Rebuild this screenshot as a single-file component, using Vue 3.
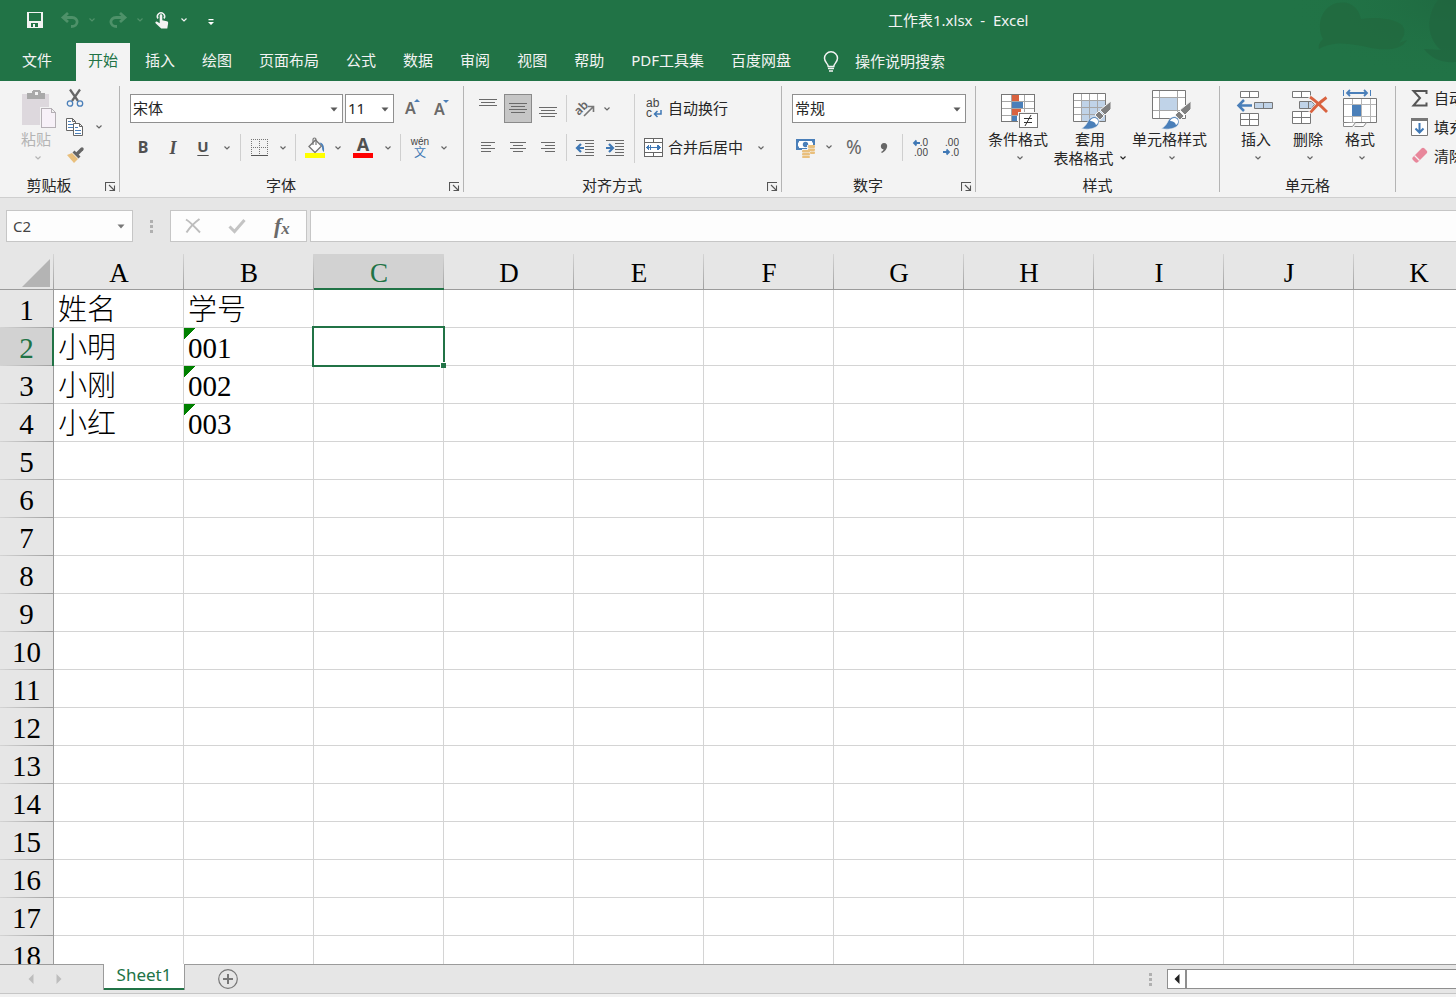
<script setup>
import { ref } from 'vue'

const tabs = ['开始', '插入', '绘图', '页面布局', '公式', '数据', '审阅', '视图', '帮助', 'PDF工具集', '百度网盘']
const activeTab = ref('开始')
const columns = ['A', 'B', 'C', 'D', 'E', 'F', 'G', 'H', 'I', 'J', 'K']
const rowCount = 18
const cells = {
  A1: '姓名', B1: '学号',
  A2: '小明', B2: '001',
  A3: '小刚', B3: '002',
  A4: '小红', B4: '003',
}
const flagged = ['B2', 'B3', 'B4']
const selected = ref('C2')
const formula = ref('')
const isCol = (c) => selected.value.replace(/\d+/, '') === c
const isRow = (r) => selected.value.replace(/\D+/, '') === String(r)
</script>

<template>
  <div class="app">
    <svg class="defs" aria-hidden="true">
      <symbol id="chev" viewBox="0 0 8 6"><path d="M1.5 1.5 4 4 6.5 1.5" fill="none" stroke="currentColor" stroke-width="1.2" /></symbol>
      <symbol id="caret" viewBox="0 0 8 5"><path d="M.5 .5h7L4 4.5z" fill="currentColor" /></symbol>
      <symbol id="launch" viewBox="0 0 11 10">
        <path d="M.5 9V.5H10M4 3l5 5M9.5 3.500v5H4.500" fill="none" stroke="#555" stroke-width="1.100" />
      </symbol>
      <symbol id="brush" viewBox="0 0 44 44">
        <path d="M43 15v8l-6 6-5-5z" fill="#7f7f7f" stroke="#f3f3f3" stroke-width="1" />
        <path d="m31 25 5 5-4 4-5-5z" fill="#7f7f7f" stroke="#f3f3f3" stroke-width="1" />
        <path d="M13 42.500c5-2 6-6 8-9s7-4 9-1 1 7-3 9-9 2-14 1z" fill="#4a7fb9" stroke="#f3f3f3" stroke-width=".6" />
        <path d="M22 35c1-3 5-4 7-2s1 5-1 6c-1-3-3-4-6-4z" fill="#fff" />
      </symbol>
    </svg>

    <header class="top">
      <svg class="deco" width="170" height="81" viewBox="0 0 170 81" aria-hidden="true">
        <defs>
          <radialGradient id="shade" cx="1" cy="0" r="1">
            <stop offset="0" stop-color="#1f6840" stop-opacity=".9" />
            <stop offset="1" stop-color="#217346" stop-opacity="0" />
          </radialGradient>
        </defs>
        <rect width="170" height="81" fill="url(#shade)" />
        <path d="M33 49C32 45 34 42 37 39 31 28 33 8 51 3c14-3 22 6 24 16 14-2 32-1 41 6 4 6 3 11-3 18l8-3c-5 9-18 11-36 8C68 44 48 40 33 49z" fill="#22693f" opacity=".8" />
        <path d="M170 0h-18c-9 12-11 26-6 38 2 5 5 9 9 12l-17-1c7 9 17 14 32 13z" fill="#21653f" opacity=".7" />
      </svg>
      <div class="titlebar">
        <div class="quick">
          <button class="q save" aria-label="保存">
            <svg width="16" height="16" viewBox="0 0 16 16" class="crisp"><path d="M0 0h16v16H0zM2 1v8h12V1zM4 11v4h2v-3h2v3h3v-4z" fill="#f3f3f3" fill-rule="evenodd" /></svg>
          </button>
          <button class="q dim" aria-label="撤消">
            <svg width="18" height="16" viewBox="0 0 18 16"><path d="M7 1 2 5.500 7 10M2 5.500h9c7 0 7 9-1 9" fill="none" stroke="currentColor" stroke-width="2.800" /></svg>
          </button>
          <button class="qc dim" aria-label="撤消选项"><svg width="8" height="6"><use href="#chev" /></svg></button>
          <button class="q dim redo" aria-label="恢复">
            <svg width="18" height="16" viewBox="0 0 18 16"><path d="m11 1 5 4.500L11 10M16 5.500H7c-7 0-7 9 1 9" fill="none" stroke="currentColor" stroke-width="2.800" /></svg>
          </button>
          <button class="qc dim" aria-label="恢复选项"><svg width="8" height="6"><use href="#chev" /></svg></button>
          <button class="q hand" aria-label="触摸/鼠标模式">
            <svg width="14" height="18" viewBox="0 0 14 18">
              <path d="M3 7.500a3.600 3.600 0 1 1 6 0" fill="none" stroke="#f3f3f3" stroke-width="1.500" />
              <path d="M4.700 4.500c0-1.700 2.600-1.700 2.600 0v4.700l4.500 1c1.200.3 1.500 1 1.300 2.200l-.8 5.100H6.200L.6 12.300c-.8-1 .5-2.200 1.600-1.500l2.500 1.400z" fill="#f3f3f3" />
            </svg>
          </button>
          <button class="qc" aria-label="触摸选项"><svg width="8" height="6"><use href="#chev" /></svg></button>
          <button class="qc custom" aria-label="自定义快速访问工具栏">
            <svg width="6" height="7" viewBox="0 0 6 7"><path d="M.5 0h5v1.200h-5zM0 3h6L3 6z" fill="#fff" /></svg>
          </button>
        </div>
        <div class="title">工作表1.xlsx&nbsp; -&nbsp; Excel</div>
      </div>
      <nav class="tabs">
        <button class="tab file">文件</button>
        <button v-for="t in tabs" :key="t" class="tab" :class="{ active: t === activeTab }" @click="activeTab = t">{{ t }}</button>
        <button class="tell">
          <svg width="16" height="22" viewBox="0 0 16 22"><path d="M5.200 15.500c0-3-3.700-4-3.700-8.200a6.500 6.500 0 0 1 13 0c0 4.200-3.700 5.200-3.700 8.200zM5 17.500h6M6 20h4" fill="none" stroke="#f3f3f3" stroke-width="1.500" /></svg>
          <span>操作说明搜索</span>
        </button>
      </nav>
    </header>

    <section class="ribbon">
      <div class="group g-clip">
        <div class="body">
          <button class="big disabled">
            <svg width="44" height="44" viewBox="0 0 44 44" class="crisp">
              <path d="M8 8h27v31H8z" fill="#ddd8dd" />
              <path d="M13 7h5V5l2-1h5l2 1v2h4v6H13z" fill="#a9a9a9" />
              <path d="M21 6h3v3h-3z" fill="#f3f3f3" />
              <path d="M26 21h17v22H26z" fill="#f3f3f3" />
              <path d="M27.500 22.500h10l4 4v15h-14zM37.500 22.500v4h4" fill="#f7f1f8" stroke="#b5b0b5" />
            </svg>
            <span>粘贴</span>
            <span class="down"><svg width="8" height="6"><use href="#chev" /></svg></span>
          </button>
          <div class="stack">
            <button class="sm" aria-label="剪切">
              <svg width="18" height="18" viewBox="0 0 18 18">
                <path d="M4 .5 12 12M14 .5 6 12" stroke="#666" stroke-width="2.200" />
                <circle cx="4" cy="14.500" r="2.700" fill="none" stroke="#4a7fb9" stroke-width="1.300" /><circle cx="14" cy="14.500" r="2.700" fill="none" stroke="#4a7fb9" stroke-width="1.300" />
              </svg>
            </button>
            <div class="pair">
              <button class="sm" aria-label="复制">
                <svg width="18" height="18" viewBox="0 0 18 18">
                  <path d="M.5.5h6l3 3v9h-9zM6.500.5v3h3" fill="#fff" stroke="#666" />
                  <path d="M2 3.500h3M2 6.500h5M2 9.500h5" stroke="#4a7fb9" />
                  <path d="M7.500 5.500h6l3 3v9h-9zM13.500 5.500v3h3" fill="#fff" stroke="#666" />
                  <path d="M9 9.500h3M9 12.500h6M9 15.500h6" stroke="#4a7fb9" />
                </svg>
              </button>
              <button class="chev" aria-label="复制选项"><svg width="8" height="6"><use href="#chev" /></svg></button>
            </div>
            <button class="sm" aria-label="格式刷">
              <svg width="18" height="18" viewBox="0 0 18 18">
                <path d="m1 8 5-2 6 6-4 4z" fill="#e9bf7c" /><path d="m6.500 5.500 2-2 6 6-2 2z" fill="#666" /><path d="M11.500 6.500 16 2" stroke="#666" stroke-width="3.400" stroke-linecap="round" />
              </svg>
            </button>
          </div>
        </div>
        <div class="label">剪贴板</div>
        <button class="launcher" aria-label="剪贴板设置"><svg width="11" height="10"><use href="#launch" /></svg></button>
      </div>

      <div class="group g-font">
        <div class="rows">
          <div class="row fields">
            <label class="pick name"><select aria-label="字体"><option>宋体</option></select><svg width="8" height="5"><use href="#caret" /></svg></label>
            <label class="pick size"><select aria-label="字号"><option>11</option></select><svg width="8" height="5"><use href="#caret" /></svg></label>
            <div class="pair grow">
              <button class="tool" aria-label="增大字号"><svg width="20" height="24" viewBox="0 0 20 24"><text x="3" y="17" class="ga">A</text><path d="M12 5h6l-3-3z" fill="#4a7fb9" /></svg></button>
              <button class="tool" aria-label="减小字号"><svg width="20" height="24" viewBox="0 0 20 24"><text x="4" y="18" class="ga">A</text><path d="M13 3h6l-3 3z" fill="#4a7fb9" /></svg></button>
            </div>
          </div>
          <div class="row">
            <button class="tool w30 bold">B</button>
            <button class="tool w30 ital">I</button>
            <button class="tool w30 under">U</button>
            <button class="chev" aria-label="下划线选项"><svg width="8" height="6"><use href="#chev" /></svg></button>
            <i class="sep"></i>
            <button class="tool w30" aria-label="边框">
              <svg width="18" height="18" viewBox="0 0 18 18" class="crisp"><path d="M0 .5h17M0 8.500h17M.5 0v16M8.500 0v16M16.500 0v16" stroke="#777" stroke-dasharray="1 1" /><path d="M0 16.500h17" stroke="#555" /></svg>
            </button>
            <button class="chev c16" aria-label="边框选项"><svg width="8" height="6"><use href="#chev" /></svg></button>
            <i class="sep"></i>
            <button class="tool w30" aria-label="填充颜色">
              <svg width="20" height="21" viewBox="0 0 20 21">
                <path d="M4 9.500 10.500 3l6 6-6.500 6.500z" fill="#fff" stroke="#777" stroke-width="1.300" />
                <path d="M8 8V2.500c0-2 3-2 3 0V8" fill="none" stroke="#777" stroke-width="1.200" />
                <path d="m14.500 5.500 2 .5c2 1 3 4 2.500 9-2-1-2-4-2-6z" fill="#4a7fb9" />
                <path d="M0 16h20v5H0z" fill="#ff0" />
              </svg>
            </button>
            <button class="chev c16" aria-label="填充颜色选项"><svg width="8" height="6"><use href="#chev" /></svg></button>
            <button class="tool w34" aria-label="字体颜色">
              <svg width="20" height="21" viewBox="0 0 20 21"><text x="10" y="14" class="fa">A</text><path d="M0 16h20v5H0z" fill="#f00" /></svg>
            </button>
            <button class="chev c16" aria-label="字体颜色选项"><svg width="8" height="6"><use href="#chev" /></svg></button>
            <i class="sep"></i>
            <button class="tool w30" aria-label="拼音指南">
              <svg width="20" height="22" viewBox="0 0 20 22"><text x="10" y="8" class="py">wén</text><text x="10" y="20" class="wen">文</text></svg>
            </button>
            <button class="chev" aria-label="拼音选项"><svg width="8" height="6"><use href="#chev" /></svg></button>
          </div>
        </div>
        <div class="label shift">字体</div>
        <button class="launcher" aria-label="字体设置"><svg width="11" height="10"><use href="#launch" /></svg></button>
      </div>

      <div class="group g-align">
        <div class="rows split">
          <div class="half">
            <div class="row gap2">
              <button class="tool" aria-label="顶端对齐"><svg width="20" height="28" viewBox="0 0 20 28" class="crisp"><path d="M1 4.500h18M3 7.500h14M1 10.500h18" class="ln" /></svg></button>
              <button class="tool on" aria-label="垂直居中"><svg width="20" height="27" viewBox="0 0 20 27" class="crisp"><path d="M1 8.500h18M3 11.500h14M1 14.500h18M3 17.500h14" class="ln" /></svg></button>
              <button class="tool" aria-label="底端对齐"><svg width="20" height="28" viewBox="0 0 20 28" class="crisp"><path d="M1 12.500h18M3 15.500h14M1 18.500h18M3 21.500h14" class="ln" /></svg></button>
              <i class="sep mid"></i>
              <button class="tool" aria-label="方向">
                <svg width="20" height="20" viewBox="0 0 20 20"><text x="0" y="12" class="ab" transform="rotate(-45 8 10)">ab</text><path d="m9 17 9-9M13 7.500h5.500V13" fill="none" stroke="#777" stroke-width="1.600" /></svg>
              </button>
              <button class="chev c12" aria-label="方向选项"><svg width="8" height="6"><use href="#chev" /></svg></button>
            </div>
            <div class="row gap2">
              <button class="tool" aria-label="左对齐"><svg width="18" height="18" viewBox="0 0 18 18" class="crisp"><path d="M2 3.500h14M2 6.500h10M2 9.500h14M2 12.500h10" class="ln" /></svg></button>
              <button class="tool" aria-label="居中"><svg width="18" height="18" viewBox="0 0 18 18" class="crisp"><path d="M1 3.500h16M4 6.500h10M1 9.500h16M4 12.500h10" class="ln" /></svg></button>
              <button class="tool" aria-label="右对齐"><svg width="18" height="18" viewBox="0 0 18 18" class="crisp"><path d="M2 3.500h14M6 6.500h10M2 9.500h14M6 12.500h10" class="ln" /></svg></button>
              <i class="sep mid"></i>
              <button class="tool" aria-label="减少缩进量"><svg width="18" height="18" viewBox="0 0 18 18"><path d="M0 1.500h18M9 4.500h9M9 7.500h9M9 10.500h9M9 13.500h9M0 16.500h18" class="ln" /><path d="M8 9H1M5 5 1 9l4 4" fill="none" stroke="#3f78b5" stroke-width="2.200" /></svg></button>
              <button class="tool" aria-label="增加缩进量"><svg width="18" height="18" viewBox="0 0 18 18"><path d="M0 1.500h18M9 4.500h9M9 7.500h9M9 10.500h9M9 13.500h9M0 16.500h18" class="ln" /><path d="M0 9h7M3 5l4 4-4 4" fill="none" stroke="#3f78b5" stroke-width="2.200" /></svg></button>
            </div>
          </div>
          <i class="sep tall"></i>
          <div class="half">
            <div class="row">
              <button class="wide">
                <svg width="20" height="20" viewBox="0 0 20 20"><text x="2" y="8" class="abc">ab</text><text x="2" y="18" class="abc">c</text><path d="M17 11v4h-6M13.500 12l-3 3 3 3" fill="none" stroke="#3f78b5" stroke-width="1.500" /></svg>
                <span>自动换行</span>
              </button>
            </div>
            <div class="row">
              <button class="wide">
                <svg width="20" height="20" viewBox="0 0 20 20" class="crisp"><path d="M.5.5h18v18H.5zM.5 4.500h18M.5 14.500h18M9.500 0v4M9.500 15v4" fill="#fff" stroke="#666" /><path d="M3 9.500h13M6 7v5M13 7v5" stroke="#3f78b5" /><path d="M2 9.500 5 7v5zM17 9.500 14 7v5z" fill="#3f78b5" /></svg>
                <span>合并后居中</span>
                <svg class="wc" width="8" height="6"><use href="#chev" /></svg>
              </button>
            </div>
          </div>
        </div>
        <div class="label shift">对齐方式</div>
        <button class="launcher" aria-label="对齐设置"><svg width="11" height="10"><use href="#launch" /></svg></button>
      </div>

      <div class="group g-num">
        <div class="rows">
          <div class="row">
            <label class="pick fmt"><select aria-label="数字格式"><option>常规</option></select><svg width="8" height="5"><use href="#caret" /></svg></label>
          </div>
          <div class="row gap2">
            <div class="pair">
              <button class="tool" aria-label="会计数字格式">
                <svg width="20" height="20" viewBox="0 0 20 20">
                  <path d="M0 1h19v11H0z" fill="#4a7fb9" /><path d="M3 3h13v1.500h1v4h-1V10H3V8.500H2v-4h1z" fill="#fff" /><circle cx="9.500" cy="6.500" r="2.700" fill="#4a7fb9" />
                  <path d="M11 7h9v12h-5v1H6v-9h5z" fill="#f3f3f3" />
                  <g fill="#e9bf7c"><rect x="12" y="7" width="7" height="3" rx="1" /><rect x="12" y="10.500" width="7" height="2.500" rx="1" /><rect x="14" y="13.500" width="5" height="2.500" rx="1" /><rect x="6" y="12" width="8" height="2.500" rx="1" /><rect x="6" y="15" width="8" height="2.500" rx="1" /><rect x="6" y="18" width="8" height="2" rx="1" /></g>
                </svg>
              </button>
              <button class="chev" aria-label="货币选项"><svg width="8" height="6"><use href="#chev" /></svg></button>
            </div>
            <button class="tool pct">%</button>
            <button class="tool" aria-label="千位分隔样式"><svg width="8" height="12" viewBox="0 0 8 12"><path d="M4 1c5 0 4 7-2 10L1 10c2-1 2.500-2 2.500-2.700C-.2 7 0 1 4 1z" fill="#666" /></svg></button>
            <i class="sep mid"></i>
            <button class="tool" aria-label="增加小数位数"><svg width="18" height="20" viewBox="0 0 18 20"><text x="16" y="8" class="dec">.0</text><text x="16" y="18" class="dec">.00</text><path d="M8 5H2M4.500 2.500 2 5l2.500 2.500" fill="none" stroke="#3f78b5" stroke-width="1.800" /></svg></button>
            <button class="tool" aria-label="减少小数位数"><svg width="18" height="20" viewBox="0 0 18 20"><text x="17" y="8" class="dec">.00</text><text x="17" y="18" class="dec">.0</text><path d="M1 14h6M4.500 11.500 7 14l-2.500 2.500" fill="none" stroke="#3f78b5" stroke-width="1.800" /></svg></button>
          </div>
        </div>
        <div class="label shift">数字</div>
        <button class="launcher" aria-label="数字设置"><svg width="11" height="10"><use href="#launch" /></svg></button>
      </div>

      <div class="group g-style">
        <div class="body">
          <button class="big">
            <svg width="44" height="44" viewBox="0 0 44 44" class="crisp">
              <path d="M5.500 8.500h33v27h-33z" fill="#fff" />
              <path d="M5 15.500h34M5 22.500h34M5 29.500h34M15.500 8v28M28.500 8v28" stroke="#a6a6a6" />
              <path d="M5.500 8.500h33v27h-33z" fill="none" stroke="#777" />
              <path d="M16 9h7v6h-7zM16 23h9v6h-9z" fill="#d9623f" /><path d="M16 16h11v6H16zM16 30h5v5h-5z" fill="#4a7fb9" />
              <path d="M22 26h21v17H22z" fill="#f3f3f3" /><path d="M23.500 27.500h18v14h-18z" fill="#fff" stroke="#777" />
              <path d="M28 32.500h8M28 36.500h8" stroke="#333" /><path d="m35 29-6 11" stroke="#333" shape-rendering="auto" />
            </svg>
            <span>条件格式</span>
            <span class="down"><svg width="8" height="6"><use href="#chev" /></svg></span>
          </button>
          <button class="big">
            <svg width="44" height="44" viewBox="0 0 44 44">
              <path d="M5.500 7.500h32v28h-32z" fill="#fff" /><path d="M13 14h25v22H13z" fill="#c0d3e8" />
              <path d="M5 14.500h33M5 21.500h33M5 28.500h33M13.500 7v29M21.500 7v29M29.500 7v29" stroke="#a6a6a6" />
              <path d="M5.500 7.500h32v28h-32z" fill="none" stroke="#777" /><use href="#brush" />
            </svg>
            <span>套用</span>
            <span class="inline">表格格式<svg width="8" height="6"><use href="#chev" /></svg></span>
          </button>
          <button class="big">
            <svg width="44" height="44" viewBox="0 0 44 44">
              <path d="M4.500 4.500h33v28h-33z" fill="#fff" /><path d="M11 11h18v13H11z" fill="#c0d3e8" />
              <path d="M4 11.500h33M4 24.500h33M11.500 4v29M29.500 4v29" stroke="#a6a6a6" />
              <path d="M4.500 4.500h33v28h-33z" fill="none" stroke="#777" /><use href="#brush" />
            </svg>
            <span>单元格样式</span>
            <span class="down"><svg width="8" height="6"><use href="#chev" /></svg></span>
          </button>
        </div>
        <div class="label">样式</div>
      </div>

      <div class="group g-cell">
        <div class="body">
          <button class="big">
            <svg width="44" height="44" viewBox="0 0 44 44">
              <path d="M6.500 5.500h18v6h-18zM15.500 5.500v6M6.500 27.500h18v12h-18zM6.500 33.500h18M15.500 27.500v12" fill="#fff" stroke="#777" />
              <path d="M20.500 16.500h18v6h-18zM29.500 16.500v6" fill="#c0d3e8" stroke="#777" />
              <path d="M18 19.500H5M10 14l-5.500 5.500L10 25" fill="none" stroke="#4a7fb9" stroke-width="2.500" />
            </svg>
            <span>插入</span>
            <span class="down"><svg width="8" height="6"><use href="#chev" /></svg></span>
          </button>
          <button class="big">
            <svg width="44" height="44" viewBox="0 0 44 44">
              <path d="M6.500 5.500h18v6h-18zM15.500 5.500v6M6.500 25.500h18v12h-18zM6.500 31.500h18M15.500 25.500v12" fill="#fff" stroke="#777" />
              <path d="M13.500 15.500h12l3 3-3 4h-12zM22.500 15.500v7" fill="#c0d3e8" stroke="#777" />
              <path d="m24 10 17 17M41 11 24 27" stroke="#f3f3f3" stroke-width="5" />
              <path d="M24 11c6 4 12 10 17 15M40.500 11.500C34 16 28 22 24.500 26.500" fill="none" stroke="#d9623f" stroke-width="2.800" />
            </svg>
            <span>删除</span>
            <span class="down"><svg width="8" height="6"><use href="#chev" /></svg></span>
          </button>
          <button class="big">
            <svg width="44" height="44" viewBox="0 0 44 44">
              <path d="M5.500 4v6M32.500 4v6" stroke="#4a7fb9" /><path d="M9 7h20M12 4 9 7l3 3M26 4l3 3-3 3" fill="none" stroke="#4a7fb9" stroke-width="1.800" />
              <path d="M5.500 12.500h33v24h-33z" fill="#fff" />
              <path d="M5 18.500h34M5 30.500h34M14.500 12v24M23.500 12v24M32.500 12v24" stroke="#b5b5b5" />
              <path d="M5.500 12.500h33v24h-33z" fill="none" stroke="#777" />
              <path d="M14 19h9v11h-9z" fill="#4a7fb9" />
              <path d="M5.500 37v3.500h9l3-4M16.500 40.500h9l3-4" fill="#fff" stroke="#888" />
            </svg>
            <span>格式</span>
            <span class="down"><svg width="8" height="6"><use href="#chev" /></svg></span>
          </button>
        </div>
        <div class="label">单元格</div>
      </div>

      <div class="group g-edit">
        <button class="edit"><svg width="18" height="18" viewBox="0 0 18 18"><path d="M15.500 5V2H2.500L9 9l-6.500 7.500h13v-3" fill="none" stroke="#555" stroke-width="2" /></svg><span>自动求和</span></button>
        <button class="edit"><svg width="18" height="18" viewBox="0 0 18 18"><path d="M.5.5h16v17H.5z" fill="#fff" stroke="#777" /><path d="M0 0h17v3H0z" fill="#777" /><path d="M8.500 5v10M4.500 10.500l4 4 4-4" fill="none" stroke="#3f78b5" stroke-width="2" /></svg><span>填充</span></button>
        <button class="edit"><svg width="18" height="18" viewBox="0 0 18 18"><path d="m2 10 8.500-8.500c1-1 2-1 3 0l2 2c1 1 1 2 0 3L7 15c-1 1-2 1-3 0l-2-2c-1-1-1-2 0-3z" fill="#e8879b" /><path d="m3.500 8.500 5 5" stroke="#f3f3f3" stroke-width="1.200" /></svg><span>清除</span></button>
      </div>
    </section>

    <section class="fbar">
      <label class="namebox"><select aria-label="名称框"><option>{{ selected }}</option></select><svg width="8" height="5"><use href="#caret" /></svg></label>
      <span class="dots"><i></i><i></i><i></i></span>
      <div class="fbtns">
        <button aria-label="取消"><svg width="18" height="16" viewBox="0 0 18 16"><path d="M2 1.500c5 3 9 8 14 13M15.500 1C10 5 6 9 2.500 14.500" fill="none" stroke="#bdbdbd" stroke-width="2" /></svg></button>
        <button aria-label="输入"><svg width="18" height="16" viewBox="0 0 18 16"><path d="m1.500 8.500 5 5L16.500 2" fill="none" stroke="#c4c4c4" stroke-width="3" /></svg></button>
        <button class="fx" aria-label="插入函数"><span>f</span><small>x</small></button>
      </div>
      <input v-model="formula" class="finput" aria-label="编辑栏" />
    </section>

    <main class="sheet">
      <table class="grid">
        <colgroup><col class="rh" /><col v-for="c in columns" :key="c" class="cc" /></colgroup>
        <thead>
          <tr>
            <th class="corner"><svg width="28" height="28" viewBox="0 0 28 28"><path d="M28 0v28H0z" fill="#b4b4b4" /></svg></th>
            <th v-for="c in columns" :key="c" class="col" :class="{ sel: isCol(c) }">{{ c }}</th>
          </tr>
        </thead>
        <tbody>
          <tr v-for="r in rowCount" :key="r">
            <th class="rown" :class="{ sel: isRow(r) }">{{ r }}</th>
            <td v-for="c in columns" :key="c" :class="{ flag: flagged.includes(c + r) }" @click="selected = c + r">
              {{ cells[c + r] }}<div v-if="selected === c + r" class="cursor"><i></i></div>
            </td>
          </tr>
        </tbody>
      </table>
    </main>

    <footer class="sheetbar">
      <div class="nav">
        <button aria-label="上一张"><svg width="6" height="10" viewBox="0 0 6 10"><path d="M5.500 0v10L.5 5z" fill="#bdbdbd" /></svg></button>
        <button aria-label="下一张"><svg width="6" height="10" viewBox="0 0 6 10"><path d="M.5 0v10l5-5z" fill="#bdbdbd" /></svg></button>
      </div>
      <button class="sheettab">Sheet1</button>
      <button class="add" aria-label="新工作表"><svg width="20" height="20" viewBox="0 0 20 20"><circle cx="10" cy="10" r="9.300" fill="none" stroke="#777" stroke-width="1.200" /><path d="M10 5v10M5 10h10" stroke="#777" stroke-width="2" /></svg></button>
      <span class="dots end"><i></i><i></i><i></i></span>
      <div class="scroll">
        <button aria-label="向左滚动"><svg width="6" height="10" viewBox="0 0 6 10"><path d="M5.500 0v10L.5 5z" fill="#222" /></svg></button>
        <div class="thumb"></div>
      </div>
    </footer>
    <div class="status"></div>
  </div>
</template>

<style>
html, body { overflow: hidden; }
</style>

<style scoped>
.app { height: 100vh; display: flex; flex-direction: column; overflow: hidden; background: #e6e6e6; color: #262626; font: 15px/18px "Noto Sans", "Noto Sans CJK SC", sans-serif; }
.defs { position: absolute; width: 0; height: 0; }
button, select, input { font: inherit; color: inherit; background: none; border: 0; padding: 0; margin: 0; border-radius: 0; }
button { display: flex; align-items: center; justify-content: center; white-space: nowrap; }
svg { display: block; flex: none; overflow: visible; }
.crisp { shape-rendering: crispEdges; }

.top { position: relative; background: #217346; color: #f3f3f3; flex: none; }
.deco { position: absolute; top: 0; right: 0; overflow: hidden; }
.titlebar { position: relative; height: 40px; display: flex; align-items: center; }
.quick { display: flex; align-items: center; padding-left: 20px; width: 868px; }
.q { width: 30px; height: 30px; }
.qc { width: 14px; height: 30px; }
.save { margin-right: 5px; }
.redo { margin-left: 4px; }
.dim { color: #4e9169; }
.custom { margin-left: 13px; padding-top: 4px; }
.title { line-height: 20px; white-space: pre; }
.tabs { position: relative; display: flex; gap: 3px; height: 38px; padding-top: 3px; }
.tab { padding: 0 12px 5px; }
.tab.file { padding-left: 22px; margin-right: 9px; }
.tab.active { background: #f3f3f3; color: #217346; }
.tell { margin-left: 17px; gap: 16px; }
.tell span { padding-bottom: 2px; }

.ribbon { flex: none; display: flex; height: 106px; padding: 5px 0; background: #f3f3f3; border-bottom: 1px solid #cfcfcf; overflow: hidden; }
.group { position: relative; flex: none; box-sizing: border-box; border-right: 1px solid #b4b4b4; display: flex; flex-direction: column; }
.body { display: flex; height: 92px; }
.label { line-height: 14px; text-align: center; }
.shift, .g-clip .label { margin-right: 21px; }
.launcher { position: absolute; right: 3px; bottom: 0; }
.g-clip { width: 120px; }
.g-font { width: 344px; }
.g-align { width: 318px; }
.g-num { width: 194px; }
.g-style { width: 244px; }
.g-cell { width: 176px; }

.big { flex-direction: column; justify-content: flex-start; height: 82px; color: #262626; }
.big > span { height: 18px; display: flex; align-items: center; }
.big > span:last-child { padding-top: 1px; }
.big .down { padding-left: 4px; color: #666; }
.big .inline { gap: 5px; }
.big.disabled, .disabled .down { color: #b4b4b4; }
.g-clip .big { width: 44px; margin-left: 14px; }
.g-style .body { padding-left: 12px; }
.g-style .big:nth-child(2) { width: 84px; }
.g-style .big:nth-child(3) { width: 75px; }
.g-cell .body { padding-left: 10px; }
.g-cell .big { width: 52px; }
.stack { display: flex; flex-direction: column; padding: 2px 0 0 7px; gap: 9px; }
.sm { width: 20px; height: 20px; }
.pair { display: flex; }
.chev { width: 18px; height: 28px; color: #666; }
.stack .chev { height: 20px; margin-left: 5px; }
.c16 { width: 16px; }
.c12 { width: 12px; }

.rows { height: 84px; padding-top: 8px; display: flex; flex-direction: column; gap: 10px; }
.row { display: flex; align-items: center; height: 29px; }
.gap2 { gap: 2px; }
.tool { width: 28px; height: 29px; color: #505050; }
.w30 { width: 30px; }
.w34 { width: 34px; }
.on { background: #c6c6c6; box-shadow: inset 0 0 0 1px #8a8a8a; }
.sep { width: 1px; height: 27px; background: #cfcfcf; margin: 0 4px; flex: none; }
.sep.mid { margin: 0 2px; }
.sep.tall { height: 69px; margin: 0; }
.g-font .rows { padding-left: 8px; }
.fields { padding-left: 2px; gap: 2px; }
.grow { padding-left: 2px; }
.split { flex-direction: row; gap: 0; padding-left: 10px; }
.half { display: flex; flex-direction: column; gap: 10px; }
.half:first-child { width: 160px; }
.half:last-child { padding-left: 9px; }
.wide { gap: 4px; }
.wide span { padding-bottom: 2px; }
.wc { margin-left: 10px; color: #666; }
.g-num .rows { padding-left: 10px; }
.bold { font-weight: 700; font-size: 16px; padding-bottom: 2px; }
.ital { font: italic 700 18px/20px "Liberation Serif", serif; }
.under { font-weight: 700; text-decoration: underline; text-underline-offset: 3px; text-decoration-thickness: 1px; padding-bottom: 3px; }
.pct { font-size: 19px; color: #666; padding-bottom: 2px; }
.ga { font-size: 16px; font-weight: 600; fill: #6a6a6a; }
.fa { font-size: 18px; font-weight: 700; fill: #505050; text-anchor: middle; }
.py { font: 10px "Liberation Sans", sans-serif; fill: #444; text-anchor: middle; }
.wen { font-size: 12px; fill: #3f78b5; text-anchor: middle; }
.ab { font-size: 12px; font-weight: 600; fill: #666; }
.abc { font: 12px "Liberation Sans", sans-serif; fill: #444; }
.dec { font: 10px "Liberation Sans", sans-serif; fill: #444; text-anchor: end; }
.ln { stroke: #6a6a6a; fill: none; }

.pick, .namebox { position: relative; display: block; box-sizing: border-box; }
.pick { height: 29px; background: #fff; border: 1px solid #8f8f8f; }
.pick select, .namebox select { appearance: none; width: 100%; height: 100%; padding: 0 0 2px 2px; outline: 0; }
.pick svg, .namebox svg { position: absolute; right: 4px; top: 12px; color: #5a5a5a; pointer-events: none; }
.name { width: 213px; }
.size { width: 49px; }
.fmt { width: 174px; }

.g-edit { border: 0; padding: 2px 0 0 15px; gap: 9px; align-items: flex-start; }
.edit { gap: 5px; height: 20px; }

.fbar { flex: none; display: flex; align-items: stretch; height: 32px; padding: 12px 0; }
.namebox { width: 127px; margin-left: 6px; border: 1px solid #c6c6c6; background: #fdfdfd; }
.namebox select { padding: 0 0 0 6px; color: #444; }
.namebox svg { right: 7px; top: 13px; color: #777; }
.dots { display: flex; flex-direction: column; justify-content: center; gap: 2px; width: 37px; align-items: center; }
.dots i { width: 3px; height: 3px; background: #b0b0b0; }
.fbtns { display: flex; width: 133px; padding-right: 2px; border: 1px solid #c6c6c6; background: #fdfdfd; }
.fbtns button { flex: 1; }
.fx { color: #6a6a6a; font: italic 700 22px/24px "Liberation Serif", serif; }
.fx small { font-size: 17px; padding-top: 5px; }
.finput { flex: 1; min-width: 0; margin-left: 3px; border: 1px solid #c6c6c6; border-right: 0; background: #fdfdfd; padding: 0 8px; }

.sheet { flex: 1; min-height: 0; overflow: hidden; }
.grid { table-layout: fixed; width: 1484px; border-spacing: 0; background: #fff; font: 29px/34px "Liberation Serif", "Noto Sans CJK SC", serif; color: #000; }
.rh { width: 54px; }
.cc { width: 130px; }
th, td { box-sizing: border-box; padding: 0; font-weight: 300; overflow: hidden; white-space: nowrap; }
.corner, .col { height: 36px; border-bottom: 1px solid #9b9b9b; background: linear-gradient(#d4d4d4, #a0a0a0) right / 1px 100% no-repeat #e6e6e6; }
.col { padding-top: 3px; line-height: 32px; font-size: 27px; }
.corner svg { margin: 3px 0 0 22px; }
.col.sel { background-color: #d2d2d2; color: #217346; border-bottom-color: #217346; box-shadow: inset 0 -1px #217346; }
.rown { height: 38px; padding-top: 2px; border-right: 1px solid #9b9b9b; background: linear-gradient(90deg, #d4d4d4, #a0a0a0) bottom / 100% 1px no-repeat #e6e6e6; }
.rown.sel { background-color: #d2d2d2; color: #217346; border-right-color: #217346; box-shadow: inset -1px 0 #217346; }
td { position: relative; height: 38px; padding: 2px 0 0 4px; border-right: 1px solid #d4d4d4; border-bottom: 1px solid #d4d4d4; overflow: visible; }
.flag { background: linear-gradient(135deg, #008000 8px, transparent 8px) no-repeat; }
.cursor { position: absolute; inset: -2px; border: 2px solid #217346; z-index: 1; }
.cursor i { position: absolute; right: -3px; bottom: -3px; width: 5px; height: 5px; background: #217346; box-shadow: -1px -1px 0 #fff; }

.sheetbar { flex: none; display: flex; height: 28px; border-top: 1px solid #9b9b9b; border-bottom: 1px solid #c6c6c6; }
.nav { display: flex; width: 103px; padding-left: 17px; box-sizing: border-box; }
.nav button { width: 28px; }
.sheettab { box-sizing: border-box; width: 82px; height: 26px; margin-top: -1px; background: #fff; border: solid #9b9b9b; border-width: 0 1px; box-shadow: inset 0 -2px #217346; padding-bottom: 4px; color: #217346; font-size: 17px; }
.add { width: 86px; }
.dots.end { margin-left: auto; width: 34px; }
.scroll { display: flex; width: 20%; max-width: 289px; height: 20px; margin-top: 4px; box-sizing: border-box; border: 1px solid #8f8f8f; border-right: 0; background: #fff; }
.scroll button { width: 17px; }
.thumb { flex: 1; border-left: 2px solid #8f8f8f; }
.status { flex: none; height: 3px; background: #f1f1f1; }
</style>
